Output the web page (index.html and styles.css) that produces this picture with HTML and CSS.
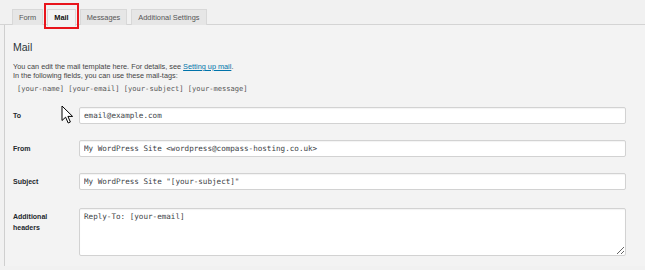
FILE: index.html
```
<!DOCTYPE html>
<html>
<head>
<meta charset="utf-8">
<link rel="stylesheet" href="styles.css">
</head>
<body>
<div class="tabs">
  <div class="tab">Form</div>
  <div class="tab active">Mail<span class="highlight"></span></div>
  <div class="tab">Messages</div>
  <div class="tab">Additional Settings</div>
</div>
<div class="panel">
  <h2 class="title">Mail</h2>
  <p class="desc">You can edit the mail template here. For details, see <a href="#">Setting up mail</a>.<br>In the following fields, you can use these mail-tags:</p>
  <p class="tags">[your-name] [your-email] [your-subject] [your-message]</p>
  <div class="row">
    <label class="label">To</label>
    <input class="field" type="text" value="email@example.com" readonly>
  </div>
  <div class="row">
    <label class="label">From</label>
    <input class="field" type="text" value="My WordPress Site &lt;wordpress@compass-hosting.co.uk&gt;" readonly>
  </div>
  <div class="row">
    <label class="label">Subject</label>
    <input class="field" type="text" value="My WordPress Site &quot;[your-subject]&quot;" readonly>
  </div>
  <div class="row row-top">
    <div class="label label-multi"><span class="line">Additional</span><span class="line">headers</span></div>
    <textarea class="field area" readonly>Reply-To: [your-email]</textarea>
  </div>
</div>
<svg class="cursor" width="13" height="19" viewBox="0 0 13 19">
  <path d="M1 1 L1 15.5 L4.6 12.2 L7.2 18 L9.4 17 L6.9 11.4 L11.6 11.4 Z" fill="#fff" stroke="#000" stroke-width="1" stroke-linejoin="round"/>
</svg>
</body>
</html>
```
FILE: styles.css
```
html, body {
  margin: 0;
  padding: 0;
  background: #f1f1f1;
  font-family: "Liberation Sans", Arial, sans-serif;
  color: #23282d;
  width: 645px;
  height: 270px;
  overflow: hidden;
  position: relative;
}

.tabs {
  display: flex;
  gap: 4px;
  padding: 9px 0 0 12px;
  height: 15px;
  border-bottom: 1px solid #d4d4d4;
}

.tab {
  position: relative;
  height: 15px;
  line-height: 15px;
  padding: 0 6px;
  font-size: 7.4px;
  color: #555;
  background: #e6e6e6;
  border: 1px solid #d8d8d8;
  border-bottom: none;
  box-sizing: content-box;
}

.tab.active {
  background: #f3f3f3;
  color: #111;
  font-weight: bold;
  height: 16px;
  margin-bottom: -1px;
}

.highlight {
  position: absolute;
  left: -4px;
  right: -4px;
  top: -7px;
  bottom: -3px;
  border: 2.5px solid #e8141b;
}

.panel {
  margin-left: 4px;
  border-left: 1px solid #cfcfcf;
  background: #f3f3f3;
  padding: 16px 0 10px 8px;
  height: 215px;
}

.title {
  margin: 0;
  font-size: 10.5px;
  line-height: 13px;
  font-weight: normal;
  color: #2c3338;
}

.desc {
  margin: 8px 0 0;
  font-size: 7.3px;
  line-height: 9px;
  color: #444;
}

.desc a {
  color: #0073aa;
}

.tags {
  margin: 4px 0 0 4px;
  font-family: "DejaVu Sans Mono", monospace;
  font-size: 7.1px;
  line-height: 9px;
  color: #555;
}

.row {
  display: grid;
  grid-template-columns: 66px 547px;
  align-items: center;
  margin-top: 16px;
}

.row:first-of-type {
  margin-top: 14px;
}

.row-top {
  align-items: start;
  margin-top: 18px;
}

.label {
  display: block;
  font-size: 7px;
  font-weight: bold;
  color: #23282d;
}

.label-multi {
  display: flex;
  flex-direction: column;
  padding-top: 3px;
}

.line {
  display: block;
  height: 11px;
  line-height: 11px;
}

.field {
  box-sizing: border-box;
  width: 547px;
  height: 17px;
  margin: 0;
  padding: 0 4px;
  border: 1px solid #d2d2d2;
  border-radius: 2px;
  background: #fff;
  box-shadow: inset 0 1px 1px rgba(0,0,0,0.05);
  font-family: "DejaVu Sans Mono", monospace;
  font-size: 7.6px;
  color: #3c4246;
  outline: none;
}

.area {
  height: 48px;
  padding: 3px 4px;
  resize: vertical;
  line-height: 10px;
}

.cursor {
  position: absolute;
  left: 61px;
  top: 105px;
}
```
